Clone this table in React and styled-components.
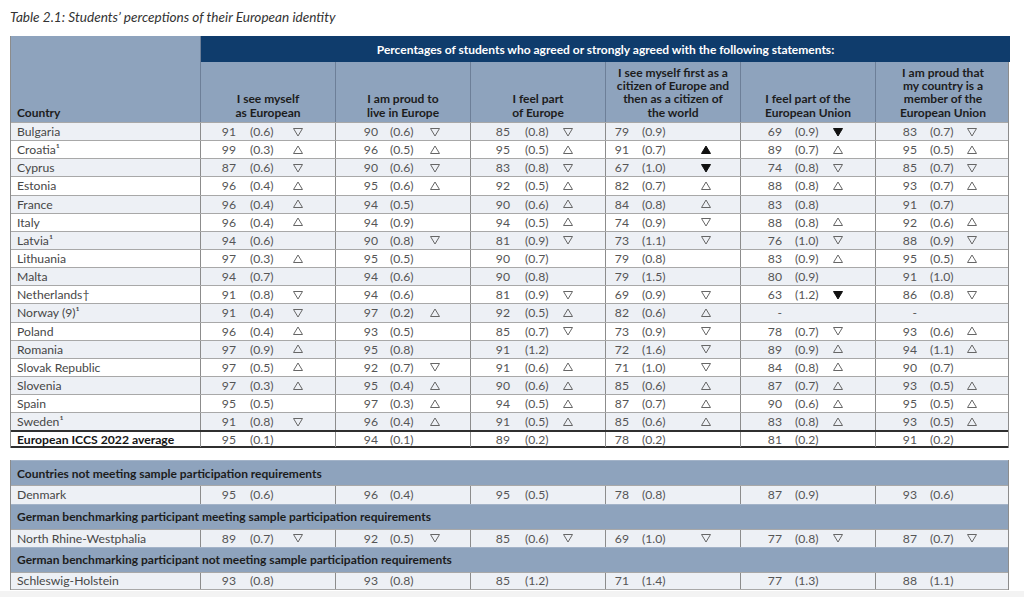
import React from "react";
import styled, { createGlobalStyle } from "styled-components";

const GlobalStyle = createGlobalStyle`
  html, body {
    margin: 0;
    padding: 0;
    background: #fff;
  }
  body {
    font-family: Lato, "Open Sans", "Liberation Sans", sans-serif;
    color: #444;
  }
`;

// column placement of number / s.e. / triangle, measured from each cell's left edge
const cols = [
  { num: 36, se: 50, tri: 93 },
  { num: 43, se: 55, tri: 95 },
  { num: 40, se: 55, tri: 93 },
  { num: 24, se: 37, tri: 96 },
  { num: 42, se: 55, tri: 93 },
  { num: 42, se: 55, tri: 92 }
];

const headers = [
  ["I see myself", "as European"],
  ["I am proud to", "live in Europe"],
  ["I feel part", "of Europe"],
  ["I see myself first as a", "citizen of Europe and", "then as a citizen of", "the world"],
  ["I feel part of the", "European Union"],
  ["I am proud that", "my country is a", "member of the", "European Union"]
];

const rows = [
  ["Bulgaria", "91 0.6 d", "90 0.6 d", "85 0.8 d", "79 0.9", "69 0.9 D", "83 0.7 d"],
  ["Croatia\u00b9", "99 0.3 u", "96 0.5 u", "95 0.5 u", "91 0.7 U", "89 0.7 u", "95 0.5 u"],
  ["Cyprus", "87 0.6 d", "90 0.6 d", "83 0.8 d", "67 1.0 D", "74 0.8 d", "85 0.7 d"],
  ["Estonia", "96 0.4 u", "95 0.6 u", "92 0.5 u", "82 0.7 u", "88 0.8 u", "93 0.7 u"],
  ["France", "96 0.4 u", "94 0.5", "90 0.6 u", "84 0.8 u", "83 0.8", "91 0.7"],
  ["Italy", "96 0.4 u", "94 0.9", "94 0.5 u", "74 0.9 d", "88 0.8 u", "92 0.6 u"],
  ["Latvia\u00b9", "94 0.6", "90 0.8 d", "81 0.9 d", "73 1.1 d", "76 1.0 d", "88 0.9 d"],
  ["Lithuania", "97 0.3 u", "95 0.5", "90 0.7", "79 0.8", "83 0.9 u", "95 0.5 u"],
  ["Malta", "94 0.7", "94 0.6", "90 0.8", "79 1.5", "80 0.9", "91 1.0"],
  ["Netherlands\u2020", "91 0.8 d", "94 0.6", "81 0.9 d", "69 0.9 d", "63 1.2 D", "86 0.8 d"],
  ["Norway (9)\u00b9", "91 0.4 d", "97 0.2 u", "92 0.5 u", "82 0.6 u", "-", "-"],
  ["Poland", "96 0.4 u", "93 0.5", "85 0.7 d", "73 0.9 d", "78 0.7 d", "93 0.6 u"],
  ["Romania", "97 0.9 u", "95 0.8", "91 1.2", "72 1.6 d", "89 0.9 u", "94 1.1 u"],
  ["Slovak Republic", "97 0.5 u", "92 0.7 d", "91 0.6 u", "71 1.0 d", "84 0.8 u", "90 0.7"],
  ["Slovenia", "97 0.3 u", "95 0.4 u", "90 0.6 u", "85 0.6 u", "87 0.7 u", "93 0.5 u"],
  ["Spain", "95 0.5", "97 0.3 u", "94 0.5 u", "87 0.7 u", "90 0.6 u", "95 0.5 u"],
  ["Sweden\u00b9", "91 0.8 d", "96 0.4 u", "91 0.5 u", "85 0.6 u", "83 0.8 u", "93 0.5 u"]
];

const average = ["European ICCS 2022 average", "95 0.1", "94 0.1", "89 0.2", "78 0.2", "81 0.2", "91 0.2"];

const extra = [
  {
    title: "Countries not meeting sample participation requirements",
    row: ["Denmark", "95 0.6", "96 0.4", "95 0.5", "78 0.8", "87 0.9", "93 0.6"]
  },
  {
    title: "German benchmarking participant meeting sample participation requirements",
    row: ["North Rhine-Westphalia", "89 0.7 d", "92 0.5 d", "85 0.6 d", "69 1.0 d", "77 0.8 d", "87 0.7 d"]
  },
  {
    title: "German benchmarking participant not meeting sample participation requirements",
    row: ["Schleswig-Holstein", "93 0.8", "93 0.8", "85 1.2", "71 1.4", "77 1.3", "88 1.1"]
  }
];

const Page = styled.div`
  width: 1024px;
  height: 597px;
  display: flex;
  flex-direction: column;
  overflow: hidden;
`;

const Title = styled.p`
  margin: 8px 0 0 10px;
  height: 28px;
  font-style: italic;
  font-size: 13.6px;
  line-height: 18px;
  color: #333;
`;

const Table = styled.div`
  margin-left: 10px;
  width: 999px;
  border-left: 1px solid #8c8c8c;
  border-right: 1px solid #8c8c8c;
  box-sizing: border-box;
`;

const Head = styled.div`
  display: grid;
  grid-template-columns: 189px repeat(6, 135px);
  grid-template-rows: 26px 60px;
  background: #8ea3bd;
`;

const CountryHead = styled.div`
  grid-row: 1 / span 2;
  display: flex;
  align-items: flex-end;
  padding: 0 0 3px 6px;
  font-weight: 700;
  font-size: 12px;
  line-height: 13px;
  color: #1c1c1c;
`;

const Banner = styled.div`
  grid-column: 2 / span 6;
  display: flex;
  align-items: center;
  justify-content: center;
  background: #0f3c6c;
  border-left: 1px solid #6d7f98;
  color: #fff;
  font-weight: 700;
  font-size: 12px;
`;

const ColHead = styled.div`
  display: flex;
  align-items: flex-end;
  justify-content: center;
  padding-bottom: 3px;
  border-left: 1px solid #6d7f98;
  text-align: center;
  font-weight: 700;
  font-size: 12px;
  line-height: 13.3px;
  color: #1c1c1c;
`;

const Row = styled.div`
  display: grid;
  grid-template-columns: 189px repeat(6, 135px);
  height: ${(p) => (p.$avg ? "18px" : "18.15px")};
  box-sizing: border-box;
  border-top: ${(p) => (p.$avg ? "2px solid #2f2f2f" : "1px solid #a8a8a8")};
  border-bottom: ${(p) => (p.$avg ? "2px solid #2f2f2f" : p.$last ? "1px solid #a8a8a8" : "none")};
  background: ${(p) => (p.$shade ? "#edf0f5" : "#fff")};
`;

const Country = styled.div`
  display: flex;
  align-items: center;
  padding-left: 6px;
  font-size: 12.2px;
  font-weight: ${(p) => (p.$bold ? 700 : 400)};
  color: ${(p) => (p.$bold ? "#151515" : "#474747")};
  white-space: nowrap;
`;

const Cell = styled.div`
  display: grid;
  grid-template-columns: ${(p) => `${p.$num - 1}px ${p.$se - p.$num}px ${p.$tri - p.$se}px 12px`};
  align-items: center;
  border-left: 1px solid #8c8c8c;
  font-size: 12.2px;
  color: #555;
  white-space: nowrap;
`;

const Num = styled.span`
  text-align: right;
`;

const Se = styled.span`
  grid-column: 3;
`;

const Mark = styled.svg`
  grid-column: 4;
  display: block;
`;

const Gap = styled.div`
  height: 12px;
`;

const Band = styled.div`
  height: 25px;
  display: flex;
  align-items: center;
  padding-left: 6px;
  background: #8ea3bd;
  border-top: 1px solid #a3b3c8;
  box-sizing: border-box;
  font-weight: 700;
  font-size: 12px;
  color: #1c1c1c;
`;

const Footer = styled.div`
  flex: 1;
  margin-top: 1px;
  background: #f3f3f3;
`;

const Tri = ({ kind }) => {
  if (!kind) return null;
  const up = kind === "u" || kind === "U";
  const filled = kind === "U" || kind === "D";
  const pts = up ? "5,1 9.5,8.5 0.5,8.5" : "0.5,1.5 9.5,1.5 5,9";
  return (
    <Mark width="10" height="10" viewBox="0 0 10 10">
      <polygon
        points={pts}
        fill={filled ? "#111" : "none"}
        stroke={filled ? "#111" : "#666"}
        strokeWidth="1"
        strokeLinejoin="round"
      />
    </Mark>
  );
};

const Value = ({ spec, text }) => {
  const [n, se, t] = text.split(" ");
  return (
    <Cell $num={spec.num} $se={spec.se} $tri={spec.tri}>
      <Num>{n}</Num>
      {se && <Se>({se})</Se>}
      <Tri kind={t} />
    </Cell>
  );
};

const DataRow = ({ data, shade, avg, last }) => (
  <Row $shade={shade} $avg={avg} $last={last}>
    <Country $bold={avg}>{data[0]}</Country>
    {data.slice(1).map((v, i) => (
      <Value key={i} spec={cols[i]} text={v} />
    ))}
  </Row>
);

export default function App() {
  return (
    <Page>
      <GlobalStyle />
      <Title>Table 2.1: Students’ perceptions of their European identity</Title>
      <Table>
        <Head>
          <CountryHead>Country</CountryHead>
          <Banner>Percentages of students who agreed or strongly agreed with the following statements:</Banner>
          {headers.map((lines, i) => (
            <ColHead key={i}>
              <div>
                {lines.map((l, j) => (
                  <div key={j}>{l}</div>
                ))}
              </div>
            </ColHead>
          ))}
        </Head>
        {rows.map((r, i) => (
          <DataRow key={r[0]} data={r} shade={i % 2 === 0} />
        ))}
        <DataRow data={average} avg />
      </Table>
      <Gap />
      <Table>
        {extra.map((s, i) => (
          <React.Fragment key={s.title}>
            <Band>{s.title}</Band>
            <DataRow data={s.row} shade last={i === extra.length - 1} />
          </React.Fragment>
        ))}
      </Table>
      <Footer />
    </Page>
  );
}
